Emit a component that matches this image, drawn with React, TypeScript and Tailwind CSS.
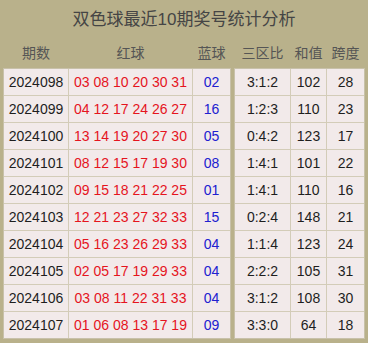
import React from 'react';

type Row = {
  issue: string;
  red: string;
  blue: string;
  zone: string;
  sum: string;
  span: string;
};

const rows: Row[] = [
  { issue: '2024098', red: '03 08 10 20 30 31', blue: '02', zone: '3:1:2', sum: '102', span: '28' },
  { issue: '2024099', red: '04 12 17 24 26 27', blue: '16', zone: '1:2:3', sum: '110', span: '23' },
  { issue: '2024100', red: '13 14 19 20 27 30', blue: '05', zone: '0:4:2', sum: '123', span: '17' },
  { issue: '2024101', red: '08 12 15 17 19 30', blue: '08', zone: '1:4:1', sum: '101', span: '22' },
  { issue: '2024102', red: '09 15 18 21 22 25', blue: '01', zone: '1:4:1', sum: '110', span: '16' },
  { issue: '2024103', red: '12 21 23 27 32 33', blue: '15', zone: '0:2:4', sum: '148', span: '21' },
  { issue: '2024104', red: '05 16 23 26 29 33', blue: '04', zone: '1:1:4', sum: '123', span: '24' },
  { issue: '2024105', red: '02 05 17 19 29 33', blue: '04', zone: '2:2:2', sum: '105', span: '31' },
  { issue: '2024106', red: '03 08 11 22 31 33', blue: '04', zone: '3:1:2', sum: '108', span: '30' },
  { issue: '2024107', red: '01 06 08 13 17 19', blue: '09', zone: '3:3:0', sum: '64', span: '18' },
];

const cell = 'h-[26px] flex items-center justify-center bg-[#f2eaea] text-[14px] whitespace-nowrap';

const App: React.FC = () => {
  return (
    <div
      className="w-[368px] h-[343px] bg-[#b9b18b] overflow-hidden"
      style={{ fontFamily: '"Liberation Sans", "Noto Sans CJK SC", sans-serif' }}
    >
      <div className="h-[36px] pt-[3px] flex items-center justify-center text-[17px] text-[#454545]">
        双色球最近10期奖号统计分析
      </div>

      <div className="h-[32px] pt-[2px] flex items-center px-[4px] text-[14px] text-[#555]">
        <div className="grid grid-cols-[64px_123px_37px] gap-px">
          <div className="text-center">期数</div>
          <div className="text-center">红球</div>
          <div className="text-center">蓝球</div>
        </div>
        <div className="ml-[5px] grid grid-cols-[55px_35px_37px] gap-px">
          <div className="text-center">三区比</div>
          <div className="text-center">和值</div>
          <div className="text-center">跨度</div>
        </div>
      </div>

      <div className="flex px-[3px]">
        <div className="grid grid-cols-[64px_123px_37px] gap-px border border-[#c8c1aa] bg-[#d3ccb8]">
          {rows.map((r) => (
            <React.Fragment key={r.issue}>
              <div className={`${cell} text-[#1e1e1e]`}>{r.issue}</div>
              <div className={`${cell} text-[#e5141e]`}>{r.red}</div>
              <div className={`${cell} text-[#2020d0]`}>{r.blue}</div>
            </React.Fragment>
          ))}
        </div>
        <div className="ml-[3px] grid grid-cols-[55px_35px_37px] gap-px border border-[#c8c1aa] bg-[#d3ccb8]">
          {rows.map((r) => (
            <React.Fragment key={r.issue}>
              <div className={`${cell} text-[#1e1e1e]`}>{r.zone}</div>
              <div className={`${cell} text-[#1e1e1e]`}>{r.sum}</div>
              <div className={`${cell} text-[#1e1e1e]`}>{r.span}</div>
            </React.Fragment>
          ))}
        </div>
      </div>
    </div>
  );
};

export default App;
